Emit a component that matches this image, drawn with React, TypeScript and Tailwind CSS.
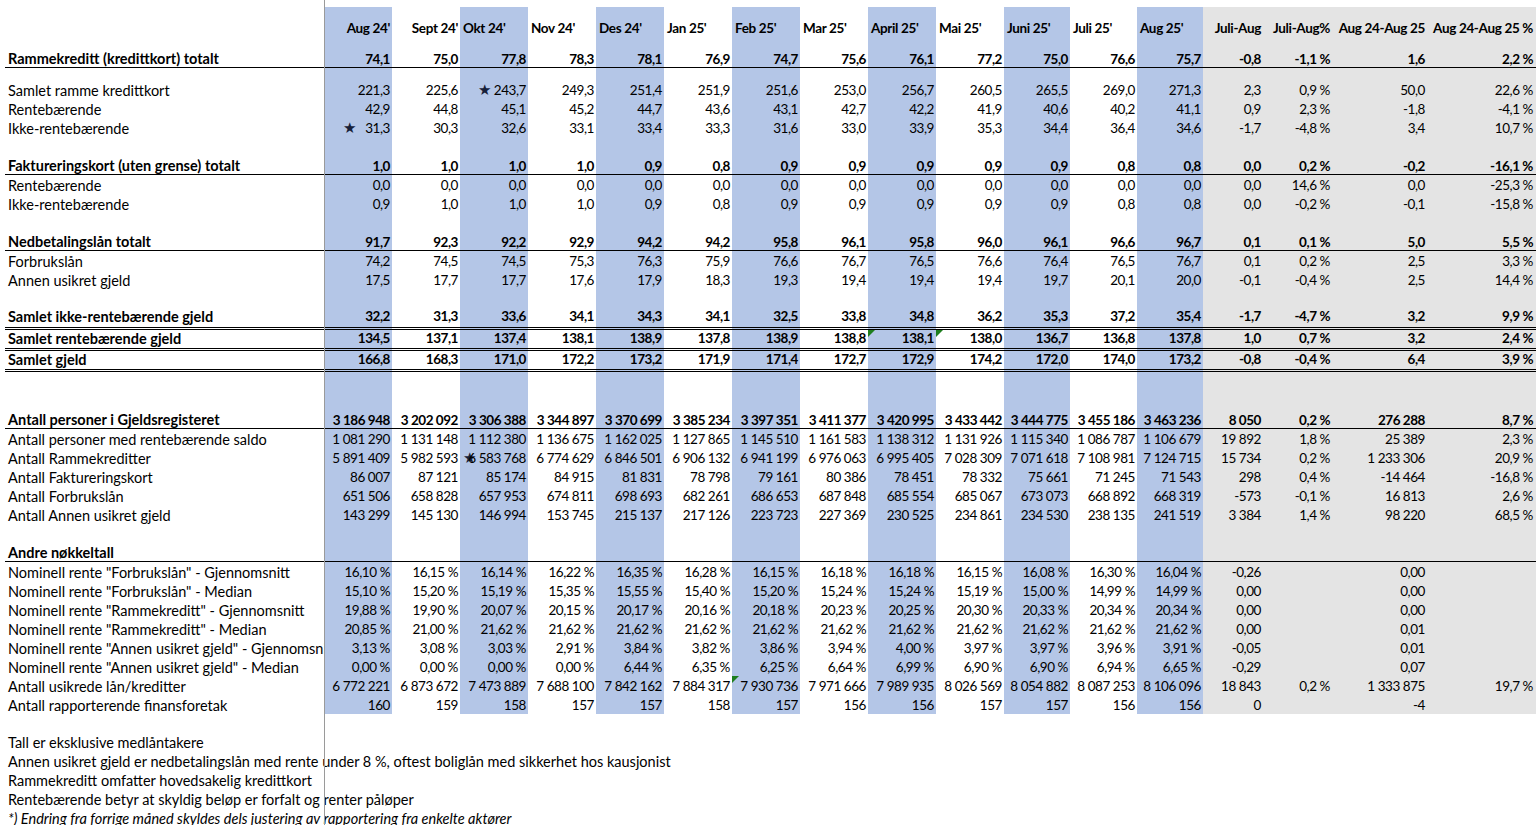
import React from "react";

const monthW = [
  "w-[67px]", "w-[68px]", "w-[68px]", "w-[68px]", "w-[68px]", "w-[68px]", "w-[68px]",
  "w-[68px]", "w-[68px]", "w-[68px]", "w-[66px]", "w-[67px]", "w-[66px]",
];
const grayW = ["w-[61px]", "w-[69px]", "w-[95px]", "w-[108px]"];

const months = [
  "Aug 24'", "Sept 24'", "Okt 24'", "Nov 24'", "Des 24'", "Jan 25'", "Feb 25'",
  "Mar 25'", "April 25'", "Mai 25'", "Juni 25'", "Juli 25'", "Aug 25'",
];
const grayHeads = ["Juli-Aug", "Juli-Aug%", "Aug 24-Aug 25", "Aug 24-Aug 25 %"];

type Marker = { col: number; kind: "star" | "tri"; left: string };

type Row =
  | { kind: "blank"; h: string }
  | {
      kind: "data";
      label: string;
      vals: string[];
      g: string[];
      bold?: boolean;
      border?: "single" | "double";
      h: string;
      markers?: Marker[];
    };

const sp = (s: string) => s.split(" | ");

const rows: Row[] = [
  {
    kind: "data", label: "Rammekreditt (kredittkort) totalt", bold: true, border: "single", h: "h-[19px]",
    vals: "74,1 75,0 77,8 78,3 78,1 76,9 74,7 75,6 76,1 77,2 75,0 76,6 75,7".split(" "),
    g: ["-0,8", "-1,1 %", "1,6", "2,2 %"],
  },
  { kind: "blank", h: "h-[12px]" },
  {
    kind: "data", label: "Samlet ramme kredittkort", h: "h-[19px]",
    vals: "221,3 225,6 243,7 249,3 251,4 251,9 251,6 253,0 256,7 260,5 265,5 269,0 271,3".split(" "),
    g: ["2,3", "0,9 %", "50,0", "22,6 %"],
    markers: [{ col: 2, kind: "star", left: "left-[18px]" }],
  },
  {
    kind: "data", label: "Rentebærende", h: "h-[19px]",
    vals: "42,9 44,8 45,1 45,2 44,7 43,6 43,1 42,7 42,2 41,9 40,6 40,2 41,1".split(" "),
    g: ["0,9", "2,3 %", "-1,8", "-4,1 %"],
  },
  {
    kind: "data", label: "Ikke-rentebærende", h: "h-[19px]",
    vals: "31,3 30,3 32,6 33,1 33,4 33,3 31,6 33,0 33,9 35,3 34,4 36,4 34,6".split(" "),
    g: ["-1,7", "-4,8 %", "3,4", "10,7 %"],
    markers: [{ col: 0, kind: "star", left: "left-[18px]" }],
  },
  { kind: "blank", h: "h-[19px]" },
  {
    kind: "data", label: "Faktureringskort (uten grense) totalt", bold: true, border: "single", h: "h-[19px]",
    vals: "1,0 1,0 1,0 1,0 0,9 0,8 0,9 0,9 0,9 0,9 0,9 0,8 0,8".split(" "),
    g: ["0,0", "0,2 %", "-0,2", "-16,1 %"],
  },
  {
    kind: "data", label: "Rentebærende", h: "h-[19px]",
    vals: "0,0 0,0 0,0 0,0 0,0 0,0 0,0 0,0 0,0 0,0 0,0 0,0 0,0".split(" "),
    g: ["0,0", "14,6 %", "0,0", "-25,3 %"],
  },
  {
    kind: "data", label: "Ikke-rentebærende", h: "h-[19px]",
    vals: "0,9 1,0 1,0 1,0 0,9 0,8 0,9 0,9 0,9 0,9 0,9 0,8 0,8".split(" "),
    g: ["0,0", "-0,2 %", "-0,1", "-15,8 %"],
  },
  { kind: "blank", h: "h-[19px]" },
  {
    kind: "data", label: "Nedbetalingslån totalt", bold: true, border: "single", h: "h-[19px]",
    vals: "91,7 92,3 92,2 92,9 94,2 94,2 95,8 96,1 95,8 96,0 96,1 96,6 96,7".split(" "),
    g: ["0,1", "0,1 %", "5,0", "5,5 %"],
  },
  {
    kind: "data", label: "Forbrukslån", h: "h-[19px]",
    vals: "74,2 74,5 74,5 75,3 76,3 75,9 76,6 76,7 76,5 76,6 76,4 76,5 76,7".split(" "),
    g: ["0,1", "0,2 %", "2,5", "3,3 %"],
  },
  {
    kind: "data", label: "Annen usikret gjeld", h: "h-[19px]",
    vals: "17,5 17,7 17,7 17,6 17,9 18,3 19,3 19,4 19,4 19,4 19,7 20,1 20,0".split(" "),
    g: ["-0,1", "-0,4 %", "2,5", "14,4 %"],
  },
  { kind: "blank", h: "h-[18px]" },
  {
    kind: "data", label: "Samlet ikke-rentebærende gjeld", bold: true, border: "double", h: "h-[23px]",
    vals: "32,2 31,3 33,6 34,1 34,3 34,1 32,5 33,8 34,8 36,2 35,3 37,2 35,4".split(" "),
    g: ["-1,7", "-4,7 %", "3,2", "9,9 %"],
  },
  {
    kind: "data", label: "Samlet rentebærende gjeld", bold: true, border: "double", h: "h-[21px]",
    vals: "134,5 137,1 137,4 138,1 138,9 137,8 138,9 138,8 138,1 138,0 136,7 136,8 137,8".split(" "),
    g: ["1,0", "0,7 %", "3,2", "2,4 %"],
    markers: [
      { col: 8, kind: "tri", left: "left-0" },
      { col: 9, kind: "tri", left: "left-0" },
    ],
  },
  {
    kind: "data", label: "Samlet gjeld", bold: true, border: "double", h: "h-[21px]",
    vals: "166,8 168,3 171,0 172,2 173,2 171,9 171,4 172,7 172,9 174,2 172,0 174,0 173,2".split(" "),
    g: ["-0,8", "-0,4 %", "6,4", "3,9 %"],
  },
  { kind: "blank", h: "h-[38px]" },
  {
    kind: "data", label: "Antall personer i Gjeldsregisteret", bold: true, border: "single", h: "h-[19px]",
    vals: sp("3 186 948 | 3 202 092 | 3 306 388 | 3 344 897 | 3 370 699 | 3 385 234 | 3 397 351 | 3 411 377 | 3 420 995 | 3 433 442 | 3 444 775 | 3 455 186 | 3 463 236"),
    g: ["8 050", "0,2 %", "276 288", "8,7 %"],
  },
  {
    kind: "data", label: "Antall personer med rentebærende saldo", h: "h-[19px]",
    vals: sp("1 081 290 | 1 131 148 | 1 112 380 | 1 136 675 | 1 162 025 | 1 127 865 | 1 145 510 | 1 161 583 | 1 138 312 | 1 131 926 | 1 115 340 | 1 086 787 | 1 106 679"),
    g: ["19 892", "1,8 %", "25 389", "2,3 %"],
  },
  {
    kind: "data", label: "Antall Rammekreditter", h: "h-[19px]",
    vals: sp("5 891 409 | 5 982 593 | 6 583 768 | 6 774 629 | 6 846 501 | 6 906 132 | 6 941 199 | 6 976 063 | 6 995 405 | 7 028 309 | 7 071 618 | 7 108 981 | 7 124 715"),
    g: ["15 734", "0,2 %", "1 233 306", "20,9 %"],
    markers: [{ col: 2, kind: "star", left: "left-[3px]" }],
  },
  {
    kind: "data", label: "Antall Faktureringskort", h: "h-[19px]",
    vals: sp("86 007 | 87 121 | 85 174 | 84 915 | 81 831 | 78 798 | 79 161 | 80 386 | 78 451 | 78 332 | 75 661 | 71 245 | 71 543"),
    g: ["298", "0,4 %", "-14 464", "-16,8 %"],
  },
  {
    kind: "data", label: "Antall Forbrukslån", h: "h-[19px]",
    vals: sp("651 506 | 658 828 | 657 953 | 674 811 | 698 693 | 682 261 | 686 653 | 687 848 | 685 554 | 685 067 | 673 073 | 668 892 | 668 319"),
    g: ["-573", "-0,1 %", "16 813", "2,6 %"],
  },
  {
    kind: "data", label: "Antall Annen usikret gjeld", h: "h-[19px]",
    vals: sp("143 299 | 145 130 | 146 994 | 153 745 | 215 137 | 217 126 | 223 723 | 227 369 | 230 525 | 234 861 | 234 530 | 238 135 | 241 519"),
    g: ["3 384", "1,4 %", "98 220", "68,5 %"],
  },
  { kind: "blank", h: "h-[19px]" },
  {
    kind: "data", label: "Andre nøkkeltall", bold: true, border: "single", h: "h-[19px]",
    vals: Array(13).fill(""),
    g: ["", "", "", ""],
  },
  {
    kind: "data", label: "Nominell rente \"Forbrukslån\" - Gjennomsnitt", h: "h-[19px]",
    vals: sp("16,10 % | 16,15 % | 16,14 % | 16,22 % | 16,35 % | 16,28 % | 16,15 % | 16,18 % | 16,18 % | 16,15 % | 16,08 % | 16,30 % | 16,04 %"),
    g: ["-0,26", "", "0,00", ""],
  },
  {
    kind: "data", label: "Nominell rente \"Forbrukslån\" - Median", h: "h-[19px]",
    vals: sp("15,10 % | 15,20 % | 15,19 % | 15,35 % | 15,55 % | 15,40 % | 15,20 % | 15,24 % | 15,24 % | 15,19 % | 15,00 % | 14,99 % | 14,99 %"),
    g: ["0,00", "", "0,00", ""],
  },
  {
    kind: "data", label: "Nominell rente \"Rammekreditt\" - Gjennomsnitt", h: "h-[19px]",
    vals: sp("19,88 % | 19,90 % | 20,07 % | 20,15 % | 20,17 % | 20,16 % | 20,18 % | 20,23 % | 20,25 % | 20,30 % | 20,33 % | 20,34 % | 20,34 %"),
    g: ["0,00", "", "0,00", ""],
  },
  {
    kind: "data", label: "Nominell rente \"Rammekreditt\" - Median", h: "h-[19px]",
    vals: sp("20,85 % | 21,00 % | 21,62 % | 21,62 % | 21,62 % | 21,62 % | 21,62 % | 21,62 % | 21,62 % | 21,62 % | 21,62 % | 21,62 % | 21,62 %"),
    g: ["0,00", "", "0,01", ""],
  },
  {
    kind: "data", label: "Nominell rente \"Annen usikret gjeld\" - Gjennomsnitt", h: "h-[19px]",
    vals: sp("3,13 % | 3,08 % | 3,03 % | 2,91 % | 3,84 % | 3,82 % | 3,86 % | 3,94 % | 4,00 % | 3,97 % | 3,97 % | 3,96 % | 3,91 %"),
    g: ["-0,05", "", "0,01", ""],
  },
  {
    kind: "data", label: "Nominell rente \"Annen usikret gjeld\" - Median", h: "h-[19px]",
    vals: sp("0,00 % | 0,00 % | 0,00 % | 0,00 % | 6,44 % | 6,35 % | 6,25 % | 6,64 % | 6,99 % | 6,90 % | 6,90 % | 6,94 % | 6,65 %"),
    g: ["-0,29", "", "0,07", ""],
  },
  {
    kind: "data", label: "Antall usikrede lån/kreditter", h: "h-[19px]",
    vals: sp("6 772 221 | 6 873 672 | 7 473 889 | 7 688 100 | 7 842 162 | 7 884 317 | 7 930 736 | 7 971 666 | 7 989 935 | 8 026 569 | 8 054 882 | 8 087 253 | 8 106 096"),
    g: ["18 843", "0,2 %", "1 333 875", "19,7 %"],
    markers: [{ col: 6, kind: "tri", left: "left-0" }],
  },
  {
    kind: "data", label: "Antall rapporterende finansforetak", h: "h-[19px]",
    vals: "160 159 158 157 157 158 157 156 156 157 157 156 156".split(" "),
    g: ["0", "", "-4", ""],
  },
];

const footer = [
  "Tall er eksklusive medlåntakere",
  "Annen usikret gjeld er nedbetalingslån med rente under 8 %, oftest boliglån med sikkerhet hos kausjonist",
  "Rammekreditt omfatter hovedsakelig kredittkort",
  "Rentebærende betyr at skyldig beløp er forfalt og renter påløper",
];

function borderCls(b?: "single" | "double") {
  if (b === "single") return "border-b border-black";
  if (b === "double") return "border-b-[3px] border-double border-black";
  return "";
}

function MarkerEl({ m }: { m: Marker }) {
  if (m.kind === "star") {
    return (
      <span
        className={`absolute ${m.left} top-1/2 -translate-y-1/2 text-[15px] leading-none tracking-normal text-[#16203a] font-['DejaVu_Sans',sans-serif]`}
      >
        ★
      </span>
    );
  }
  return (
    <svg className="absolute left-0 top-0" width="7" height="7" viewBox="0 0 7 7">
      <polygon points="0,0 7,0 0,7" fill="#1e7e1e" />
    </svg>
  );
}

function DataRow({ r }: { r: Extract<Row, { kind: "data" }> }) {
  const bc = borderCls(r.border);
  const fw = r.bold ? "font-bold" : "font-normal";
  const pt = r.border === "double" ? "" : "pt-[3px]";
  return (
    <div className={`flex ${r.h} ${fw}`}>
      <div className={`w-[320px] ${r.h} ${bc} ${pt} pl-[3px] flex items-center overflow-hidden whitespace-nowrap`}>
        {r.label}
      </div>
      {r.vals.map((v, i) => (
        <div
          key={i}
          className={`relative ${monthW[i]} ${r.h} ${bc} ${pt} ${i % 2 === 0 ? "bg-[#b4c6e7]" : "bg-white"} flex items-center justify-end pr-[2px] whitespace-nowrap text-[13.5px] tracking-[-0.45px]`}
        >
          {r.markers?.filter((m) => m.col === i).map((m, k) => <MarkerEl key={k} m={m} />)}
          <span className="relative">{v}</span>
        </div>
      ))}
      {r.g.map((v, i) => (
        <div
          key={i}
          className={`${grayW[i]} ${r.h} ${bc} ${pt} bg-[#e4e4e4] flex items-center justify-end pr-[3px] whitespace-nowrap text-[13.5px] tracking-[-0.45px]`}
        >
          {v}
        </div>
      ))}
    </div>
  );
}

function BlankRow({ h }: { h: string }) {
  return (
    <div className={`flex ${h}`}>
      <div className={`w-[320px] ${h}`} />
      {monthW.map((w, i) => (
        <div key={i} className={`${w} ${h} ${i % 2 === 0 ? "bg-[#b4c6e7]" : "bg-white"}`} />
      ))}
      {grayW.map((w, i) => (
        <div key={i} className={`${w} ${h} bg-[#e4e4e4]`} />
      ))}
    </div>
  );
}

export default function App() {
  return (
    <div className="relative w-[1536px] h-[825px] overflow-hidden bg-white text-black font-['Lato',sans-serif] text-[14.5px] leading-none">
      <div className="pt-[7px] pl-[5px]">
        {/* header row */}
        <div className="flex h-[42px] font-bold text-[13.5px] tracking-[-0.35px]">
          <div className="w-[320px] h-[42px]" />
          {months.map((m, i) => (
            <div
              key={i}
              className={`${monthW[i]} h-[42px] ${i % 2 === 0 ? "bg-[#b4c6e7]" : "bg-white"} flex items-center pt-[2px] ${i < 2 ? "justify-end pr-[2px]" : "justify-start pl-[3px]"} whitespace-nowrap`}
            >
              {m}
            </div>
          ))}
          {grayHeads.map((m, i) => (
            <div
              key={i}
              className={`${grayW[i]} h-[42px] bg-[#e4e4e4] flex items-center pt-[2px] justify-end pr-[3px] whitespace-nowrap`}
            >
              {m}
            </div>
          ))}
        </div>
        {rows.map((r, i) =>
          r.kind === "blank" ? <BlankRow key={i} h={r.h} /> : <DataRow key={i} r={r} />
        )}
        {/* footer notes */}
        <div className="h-[19px]" />
        {footer.map((t, i) => (
          <div key={i} className="h-[19px] pt-[2px] pl-[3px] flex items-center whitespace-nowrap">
            {t}
          </div>
        ))}
        <div className="h-[19px] pt-[2px] pl-[3px] flex items-center whitespace-nowrap italic">
          *) Endring fra forrige måned skyldes dels justering av rapportering fra enkelte aktører
        </div>
      </div>
      {/* frozen pane divider */}
      <div className="absolute left-[324px] top-0 w-px h-[825px] bg-[#9a9a9a]" />
    </div>
  );
}
